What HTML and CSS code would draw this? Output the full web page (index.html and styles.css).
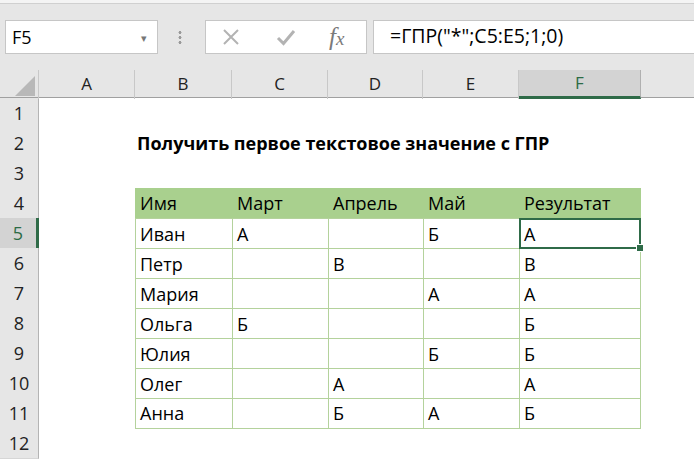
FILE: index.html
```html
<!DOCTYPE html>
<html lang="ru">
<head>
    <meta charset="UTF-8">
    <title>ГПР</title>
    <link rel="stylesheet" href="styles.css">
</head>
<body>
    <!-- Ribbon edge -->
    <div class="ribbon-edge"></div>

    <!-- Formula bar -->
    <div class="formula-bar">
        <div class="name-box">
            <span>F5</span>
            <span class="arrow">&#9662;</span>
        </div>
        <div class="grip"></div>
        <div class="buttons">
            <svg class="btn" width="20" height="20" viewBox="0 0 20 20">
                <path d="M3 3 L17 17 M17 3 L3 17" stroke="#b3b3b3" stroke-width="2" fill="none"/>
            </svg>
            <svg class="btn" width="20" height="20" viewBox="0 0 20 20">
                <path d="M2 11 L7.5 16.5 L18 4" stroke="#b3b3b3" stroke-width="3" fill="none"/>
            </svg>
            <span class="fx"><i>f</i><i class="x">x</i></span>
        </div>
        <div class="formula">=ГПР("*";C5:E5;1;0)</div>
    </div>

    <!-- Sheet -->
    <div class="sheet">
        <div class="row head">
            <div class="corner"></div>
            <div class="ch">A</div>
            <div class="ch">B</div>
            <div class="ch">C</div>
            <div class="ch">D</div>
            <div class="ch">E</div>
            <div class="ch active">F</div>
            <div class="ch last"></div>
        </div>

        <div class="row">
            <div class="rh">1</div>
        </div>

        <div class="row">
            <div class="rh">2</div>
            <div class="title">Получить первое текстовое значение с ГПР</div>
        </div>

        <div class="row">
            <div class="rh">3</div>
        </div>

        <div class="row">
            <div class="rh">4</div>
            <div></div>
            <div class="th">Имя</div>
            <div class="th">Март</div>
            <div class="th">Апрель</div>
            <div class="th">Май</div>
            <div class="th">Результат</div>
        </div>

        <div class="row">
            <div class="rh active">5</div>
            <div></div>
            <div class="td">Иван</div>
            <div class="td">А</div>
            <div class="td"></div>
            <div class="td">Б</div>
            <div class="td end selected">А</div>
        </div>

        <div class="row">
            <div class="rh">6</div>
            <div></div>
            <div class="td">Петр</div>
            <div class="td"></div>
            <div class="td">В</div>
            <div class="td"></div>
            <div class="td end">В</div>
        </div>

        <div class="row">
            <div class="rh">7</div>
            <div></div>
            <div class="td">Мария</div>
            <div class="td"></div>
            <div class="td"></div>
            <div class="td">А</div>
            <div class="td end">А</div>
        </div>

        <div class="row">
            <div class="rh">8</div>
            <div></div>
            <div class="td">Ольга</div>
            <div class="td">Б</div>
            <div class="td"></div>
            <div class="td"></div>
            <div class="td end">Б</div>
        </div>

        <div class="row">
            <div class="rh">9</div>
            <div></div>
            <div class="td">Юлия</div>
            <div class="td"></div>
            <div class="td"></div>
            <div class="td">Б</div>
            <div class="td end">Б</div>
        </div>

        <div class="row">
            <div class="rh">10</div>
            <div></div>
            <div class="td">Олег</div>
            <div class="td"></div>
            <div class="td">А</div>
            <div class="td"></div>
            <div class="td end">А</div>
        </div>

        <div class="row">
            <div class="rh">11</div>
            <div></div>
            <div class="td bottom">Анна</div>
            <div class="td bottom"></div>
            <div class="td bottom">Б</div>
            <div class="td bottom">А</div>
            <div class="td end bottom">Б</div>
        </div>

        <div class="row">
            <div class="rh">12</div>
        </div>
    </div>
</body>
</html>
```

FILE: styles.css
```css
/* Page */
body {
    margin: 0;
    padding: 0;
    width: 694px;
    height: 462px;
    overflow: hidden;
    background: white;
    font-family: "Open Sans", "Noto Sans", sans-serif;
    color: #000;
}

* {
    box-sizing: border-box;
}

/* Bottom edge of the ribbon */
.ribbon-edge {
    height: 4px;
    background: #f4f4f4;
    border-bottom: 1px solid #d0d0d0;
}

/* Formula bar */
.formula-bar {
    height: 66px;
    background: #e6e6e6;
    display: flex;
    align-items: flex-start;
    padding: 16px 0 0 5px;
}

.name-box {
    width: 153px;
    height: 34px;
    background: white;
    border: 1px solid #c6c6c6;
    display: flex;
    align-items: center;
    justify-content: space-between;
    padding: 0 10px 0 6px;
    font-size: 18px;
}

.name-box .arrow {
    font-size: 11px;
    color: #777;
}

.grip {
    width: 4px;
    height: 15px;
    margin: 10px 23px 0 20px;
    background: radial-gradient(circle, #9a9a9a 1.4px, transparent 1.6px) 0 0 / 4px 5px repeat-y;
}

.buttons {
    width: 162px;
    height: 34px;
    background: white;
    border: 1px solid #c6c6c6;
    display: flex;
    align-items: center;
    gap: 35px;
    padding-left: 15px;
    margin-right: 6px;
}

.fx {
    font-family: "Liberation Serif", serif;
    color: #7a7a7a;
    font-size: 25px;
    margin-left: -2px;
}

.fx .x {
    font-size: 19px;
}

.formula {
    flex: 1;
    height: 34px;
    background: white;
    border: 1px solid #c6c6c6;
    border-right: none;
    padding: 1px 0 0 16px;
    font-size: 19.5px;
    line-height: 28px;
}

/* Sheet grid */
.row {
    display: grid;
    grid-template-columns: 39px 96px 97px 96px 95px 96px 122px 1fr;
    height: 30px;
    font-size: 18px;
}

.row.head {
    height: 28px;
    background: #e6e6e6;
    border-bottom: 1px solid #a0a0a0;
}

.corner {
    position: relative;
    border-right: 1px solid #c8c8c8;
}

.corner::after {
    content: "";
    position: absolute;
    right: 3px;
    bottom: 3px;
    border-left: 20px solid transparent;
    border-bottom: 20px solid #b8b8b8;
}

.ch {
    border-right: 1px solid #c8c8c8;
    text-align: center;
    font-size: 17px;
    line-height: 28px;
    color: #222;
}

.ch.last {
    border-right: none;
}

.ch.active {
    background: #d3d3d3;
    color: #2c6b45;
    border-bottom: 3px solid #2f6b48;
    border-right-color: #b0b0b0;
    line-height: 26px;
}

.rh {
    background: #e6e6e6;
    border-right: 1px solid #b4b4b4;
    border-bottom: 1px solid #d6d6d6;
    text-align: center;
    font-size: 18px;
    line-height: 30px;
    color: #222;
}

.rh.active {
    background: #d3d3d3;
    color: #2c6b45;
    border-right: 3px solid #2f6b48;
}

.title {
    grid-column: 3 / span 5;
    font-weight: bold;
    font-size: 18px;
    padding: 2px 0 0 2px;
    line-height: 26px;
    white-space: nowrap;
}

/* Data table */
.th {
    background: #a9d08e;
    padding: 2px 0 0 5px;
    line-height: 27px;
}

.td {
    border-left: 1px solid #b4d29c;
    border-top: 1px solid #b4d29c;
    padding: 2px 0 0 4px;
    line-height: 26px;
}

.td.end {
    border-right: 1px solid #b4d29c;
}

.td.bottom {
    border-bottom: 1px solid #b4d29c;
    line-height: 25px;
}

.td.selected {
    position: relative;
    border: 2px solid #2f6b48;
    padding: 1px 0 0 3px;
}

.td.selected::after {
    content: "";
    position: absolute;
    right: -5px;
    bottom: -5px;
    width: 6px;
    height: 6px;
    background: #2f6b48;
    border: 1px solid white;
}
```
